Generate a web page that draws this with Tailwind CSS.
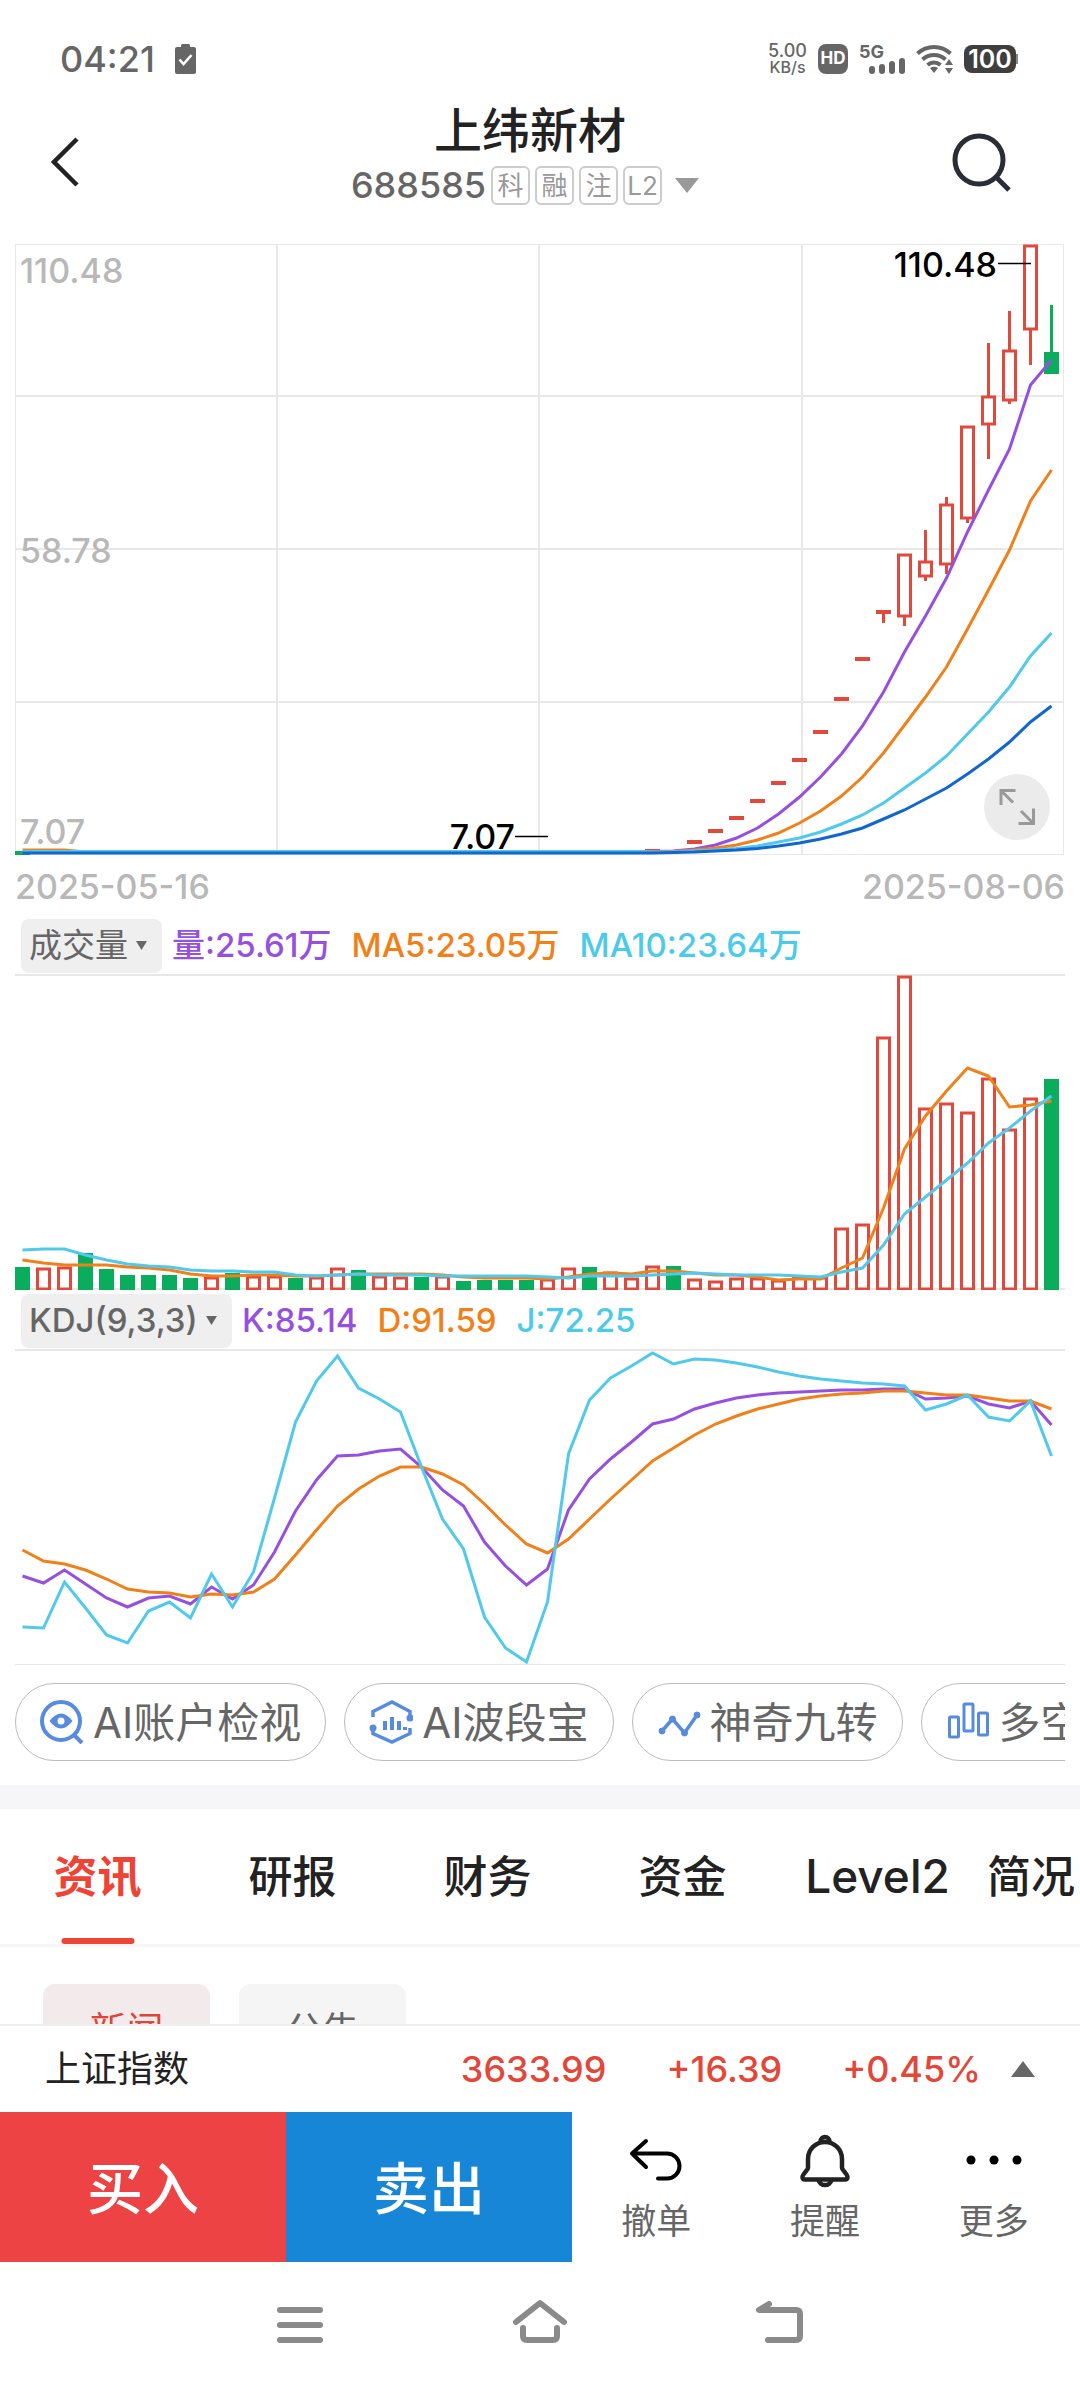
<!DOCTYPE html>
<html lang="zh-CN">

<head>
  <meta charset="UTF-8" />
  <meta name="viewport" content="width=device-width, initial-scale=1" />
  <title>上纬新材 688585</title>
  <script src="https://cdn.jsdelivr.net/npm/@tailwindcss/browser@4"></script>
</head>

<body class="bg-white text-[#222] font-['Inter','Noto_Sans_CJK_SC',sans-serif]">
  <div class="h-screen flex flex-col overflow-hidden">

    <!-- Status bar -->
    <div class="flex items-center justify-between pt-[36px] pl-[60px] pr-[62px] text-[#666]">
      <div class="flex items-center gap-[20px]">
        <span class="text-[36px] leading-[46px] font-medium">04:21</span>
        <svg class="w-[21px] h-[30px]" viewBox="0 0 21 30" fill="none">
          <path d="M0 5a2 2 0 0 1 2-2h4V1.500a1.500 1.500 0 0 1 1.500-1.500h6A1.500 1.500 0 0 1 15 1.500V3h4a2 2 0 0 1 2 2v23a2 2 0 0 1-2 2H2a2 2 0 0 1-2-2z" fill="#666" />
          <path d="M4.500 15.500l4 4.500 8-9" stroke="#fff" stroke-width="2.600" />
        </svg>
      </div>
      <div class="flex items-center gap-[11px]">
        <div class="text-center text-[16px] leading-[17px] font-medium">
          <div class="text-[18px]">5.00</div>
          <div>KB/s</div>
        </div>
        <span class="flex items-center justify-center w-[30px] h-[30px] rounded-lg bg-[#666] text-white text-[17px] font-bold">HD</span>
        <svg class="w-[46px] h-[34px]" viewBox="0 0 46 34" fill="#666">
          <text x="0" y="16" font-size="18" font-weight="700">5G</text>
          <rect x="10" y="24" width="6" height="8" rx="3" />
          <rect x="20" y="22" width="6" height="10" rx="3" />
          <rect x="30" y="19" width="6" height="13" rx="3" />
          <rect x="40" y="16" width="6" height="16" rx="3" />
        </svg>
        <svg class="w-[37px] h-[30px]" viewBox="0 0 37 30" fill="none" stroke="#666" stroke-width="4">
          <path d="M1.500 9.500a24 24 0 0 1 33 0" />
          <path d="M6.500 15.500a17 17 0 0 1 23 0" />
          <path d="M11.500 21a10 10 0 0 1 13 0" />
          <path d="M18 29l-4-5q4-2.500 8 0z" fill="#666" stroke="none" />
          <path d="M33 15l4 6h-8zM33 30l4-6h-8z" fill="#666" stroke="none" />
        </svg>
        <div class="flex items-center">
          <span class="flex items-center justify-center w-[52px] h-[28px] rounded-lg bg-[#3f3f3f] text-white text-[25px] leading-[28px] font-semibold">100</span>
          <span class="w-[2px] h-[10px] bg-[#888]"></span>
        </div>
      </div>
    </div>

    <!-- Title -->
    <header class="flex items-center pt-[19px] pb-[35px]">
      <button type="button" aria-label="返回" class="w-[120px] pl-[50px] pt-[14px]">
        <svg class="w-[30px] h-[50px]" viewBox="0 0 30 50" fill="none" stroke="#222" stroke-width="4.500">
          <path d="M27 2L4 25l23 23" />
        </svg>
      </button>
      <div class="flex-1 flex flex-col items-center">
        <h1 class="text-[48px] leading-[60px] font-medium">上纬新材</h1>
        <div class="flex items-center gap-[5px] pr-[10px] text-[26px] text-[#999]">
          <span class="text-[36px] leading-[48px] font-medium text-[#666]">688585</span>
          <span class="flex items-center justify-center w-[39px] h-[39px] border-2 border-[#ccc] rounded-md">科</span>
          <span class="flex items-center justify-center w-[39px] h-[39px] border-2 border-[#ccc] rounded-md">融</span>
          <span class="flex items-center justify-center w-[39px] h-[39px] border-2 border-[#ccc] rounded-md">注</span>
          <span class="flex items-center justify-center w-[39px] h-[39px] border-2 border-[#ccc] rounded-md">L2</span>
          <button type="button" aria-label="切换股票" class="pl-2">
            <svg class="w-[24px] h-[15px]" viewBox="0 0 24 15" fill="#999"><path d="M0 0h24L12 15z" /></svg>
          </button>
        </div>
      </div>
      <button type="button" aria-label="搜索" class="flex w-[140px] pl-[12px] pt-[14px]">
        <svg class="w-[60px] h-[60px]" viewBox="0 0 60 60" fill="none" stroke="#2a2c38" stroke-width="5">
          <circle cx="27" cy="28" r="24" />
          <path d="M44 45l13 13" />
        </svg>
      </button>
    </header>

    <main class="flex-1 min-h-0 overflow-hidden">
      <!-- Daily K line -->
      <section class="relative mx-[15px]">
        <svg id="priceChart" class="block w-full" viewBox="0 0 1050 612" fill="none">
          <g stroke="#e8e8e8" stroke-width="2">
            <path d="M0 152H1049M0 305H1049M0 458H1049M262 0V610M524 0V610M787 0V610" />
            <rect x="0.500" y="0.500" width="1048" height="610" stroke-width="1" />
          </g>
          <g fill="#b8b8b8" font-size="34" font-weight="500">
            <text x="5" y="39">110.48</text>
            <text x="5" y="319">58.78</text>
            <text x="5" y="600">7.07</text>
          </g>
          <g class="plot"></g>
          <g fill="#000" font-size="34" font-weight="500" text-anchor="end">
            <text x="982" y="33">110.48</text>
            <text x="500" y="605">7.07</text>
          </g>
          <path d="M983 19.500H1016M500 592.500H533" stroke="#000" stroke-width="1.500" />
        </svg>
        <button type="button" aria-label="全屏" class="absolute right-[15px] bottom-[16px]">
          <svg class="block w-[66px] h-[66px]" viewBox="0 0 66 66" fill="none" stroke="#999" stroke-width="3">
            <circle cx="33" cy="33" r="33" fill="#ebebeb" stroke="none" />
            <path d="M17 31V16.500H31.500M17 16.500L29 28.500M49.500 34.500V49.500H34.500M49.500 49.500L37 37" />
          </svg>
        </button>
      </section>
      <div class="flex justify-between mx-[15px] pt-[11px] pb-[8px] text-[34px] leading-[40px] font-medium text-[#b8b8b8]">
        <span>2025-05-16</span>
        <span>2025-08-06</span>
      </div>

      <!-- Volume -->
      <section class="mx-[15px]">
        <div class="flex items-center h-[59px] pl-[6px] pt-[3px] text-[33px] font-medium">
          <div class="relative mr-[10px]">
            <select aria-label="副图指标一" class="block appearance-none h-[54px] pl-[8px] pr-[34px] rounded-lg bg-[#efefef] text-[#666] font-normal">
              <option>成交量</option>
            </select>
            <svg class="absolute right-[15px] top-[22px] w-[11px] h-[9px] pointer-events-none" viewBox="0 0 11 9" fill="#666"><path d="M0 0h11L5.500 9z" /></svg>
          </div>
          <span class="mr-[20px] text-[#9650e0]">量:25.61万</span>
          <span class="mr-[20px] text-[#f28019]">MA5:23.05万</span>
          <span class="text-[#4bcaec]">MA10:23.64万</span>
        </div>
        <svg id="volumeChart" class="block w-full" viewBox="0 0 1050 316" fill="none">
          <path d="M0 1H1050M0 315H1050" stroke="#e8e8e8" stroke-width="2" />
          <g class="plot"></g>
        </svg>
      </section>

      <!-- KDJ -->
      <section class="mx-[15px]">
        <div class="flex items-center h-[59px] pl-[6px] pt-[3px] text-[33px] font-medium">
          <div class="relative mr-[10px]">
            <select aria-label="副图指标二" class="block appearance-none h-[54px] pl-[8px] pr-[34px] rounded-lg bg-[#efefef] text-[#666]">
              <option>KDJ(9,3,3)</option>
            </select>
            <svg class="absolute right-[15px] top-[22px] w-[11px] h-[9px] pointer-events-none" viewBox="0 0 11 9" fill="#666"><path d="M0 0h11L5.500 9z" /></svg>
          </div>
          <span class="mr-[20px] text-[#9650e0]">K:85.14</span>
          <span class="mr-[20px] text-[#f28019]">D:91.59</span>
          <span class="text-[#4bcaec]">J:72.25</span>
        </div>
        <svg id="kdjChart" class="block w-full" viewBox="0 0 1050 316" fill="none">
          <path d="M0 1H1050" stroke="#e8e8e8" stroke-width="2" />
          <path d="M0 315.500H1050" stroke="#e8e8e8" stroke-width="1" />
          <g class="plot"></g>
        </svg>
      </section>

      <!-- Tools -->
      <div class="flex gap-[18px] mx-[15px] pt-[18px] pb-[24px] overflow-hidden text-[42px] text-[#666]">
        <button type="button" class="flex shrink-0 items-center gap-[9px] h-[78px] px-[24px] border border-[#bbb] rounded-full">
          <svg class="w-[44px] h-[44px]" viewBox="0 0 44 44" fill="none" stroke="#568be0" stroke-width="4">
            <circle cx="21" cy="21" r="19" />
            <path d="M34 35l8 8" />
            <path d="M9.500 21q11.500-15 23 0q-11.500 15-23 0z" fill="#568be0" stroke="none" />
            <circle cx="21" cy="21" r="3.500" fill="#fff" stroke="none" />
          </svg>
          <span>AI账户检视</span>
        </button>
        <button type="button" class="flex shrink-0 items-center gap-[9px] h-[78px] px-[24px] border border-[#bbb] rounded-full">
          <svg class="w-[44px] h-[44px]" viewBox="0 0 44 44" fill="none" stroke="#568be0" stroke-width="3.500">
            <path d="M4 17V11.500L23 2l18 9.500V18M41 28v5.500L23 42 4 33.500V28" />
            <path d="M16 21v9M23 17v13M30 21v9M36 27v3" stroke-width="4" />
            <circle cx="41" cy="18" r="3.500" fill="#568be0" stroke="none" />
            <circle cx="4" cy="28" r="3.500" fill="#568be0" stroke="none" />
          </svg>
          <span>AI波段宝</span>
        </button>
        <button type="button" class="flex shrink-0 items-center gap-[9px] h-[78px] px-[24px] border border-[#bbb] rounded-full">
          <svg class="w-[44px] h-[44px]" viewBox="0 0 44 44" fill="#568be0" stroke="#568be0" stroke-width="3.500">
            <path d="M5 31L15.500 19 27.500 33 40 15" fill="none" />
            <circle cx="5" cy="31" r="3" stroke-width="1" />
            <circle cx="15.500" cy="19" r="3" stroke-width="1" />
            <circle cx="27.500" cy="33" r="3" stroke-width="1" />
            <circle cx="40" cy="15" r="3" stroke-width="1" />
          </svg>
          <span>神奇九转</span>
        </button>
        <button type="button" class="flex shrink-0 items-center gap-[9px] h-[78px] px-[24px] border border-[#bbb] rounded-full">
          <svg class="w-[44px] h-[44px]" viewBox="0 0 44 44" fill="none" stroke="#568be0" stroke-width="3">
            <rect x="3.500" y="17" width="9" height="20" rx="1" />
            <rect x="18" y="4" width="9" height="27" rx="1" />
            <rect x="32.500" y="13" width="9" height="22" rx="1" />
          </svg>
          <span>多空</span>
        </button>
      </div>

      <div class="h-[24px] bg-[#f6f6f9]"></div>

      <!-- Tabs -->
      <nav class="flex h-[138px] border-b-3 border-[#f6f6f6] overflow-hidden text-[44px] font-medium whitespace-nowrap">
        <a href="#" class="relative flex items-center justify-center shrink-0 w-[195px] text-[#ee4335] font-bold">资讯
          <span class="absolute bottom-0 left-1/2 -translate-x-1/2 w-[73px] h-[6px] rounded-full bg-[#ee4335]"></span>
        </a>
        <a href="#" class="flex items-center justify-center shrink-0 w-[195px]">研报</a>
        <a href="#" class="flex items-center justify-center shrink-0 w-[195px]">财务</a>
        <a href="#" class="flex items-center justify-center shrink-0 w-[195px]">资金</a>
        <a href="#" class="flex items-center justify-center shrink-0 w-[195px] text-[46px]">Level2</a>
        <a href="#" class="flex items-center shrink-0 pl-[12px]">简况</a>
      </nav>
      <div class="flex gap-[29px] pt-[37px] pl-[43px] text-[37px]">
        <button type="button" class="w-[167px] h-[94px] rounded-xl bg-[#f3eaeb] text-[#de4438]">新闻</button>
        <button type="button" class="w-[167px] h-[94px] rounded-xl bg-[#f5f5f5] text-[#666]">公告</button>
      </div>
    </main>

    <!-- Index bar -->
    <div class="flex items-center h-[88px] pl-[45px] pr-[45px] bg-white border-t-2 border-[#efefef] text-[36px] font-medium text-[#e2473a]">
      <span class="flex-1 font-normal text-[#222]">上证指数</span>
      <span>3633.99</span>
      <span class="ml-[60px]">+16.39</span>
      <span class="ml-[60px]">+0.45%</span>
      <button type="button" aria-label="展开指数" class="ml-[30px]">
        <svg class="w-[24px] h-[16px]" viewBox="0 0 24 16" fill="#666"><path d="M0 16h24L12 0z" /></svg>
      </button>
    </div>

    <!-- Trade bar -->
    <footer class="flex h-[150px] bg-white">
      <button type="button" class="w-[286px] pt-[4px] bg-[#ee4344] text-white text-[56px] font-medium">买入</button>
      <button type="button" class="w-[286px] pt-[4px] bg-[#1886d7] text-white text-[56px] font-medium">卖出</button>
      <div class="flex-1 grid grid-cols-3 pr-[2px] text-[35px] leading-[50px] text-[#666]">
        <button type="button" class="flex flex-col items-center pt-[12px]">
          <svg class="w-[72px] h-[72px]" viewBox="0 0 72 72" fill="none" stroke="#000" stroke-width="4" stroke-linecap="round" stroke-linejoin="round">
            <path d="M26 17L12 29.500 26 43M12 29.500H47a12.500 12.500 0 0 1 0 25H38" />
          </svg>
          <span>撤单</span>
        </button>
        <button type="button" class="flex flex-col items-center pt-[12px]">
          <svg class="w-[72px] h-[72px]" viewBox="0 0 72 72" fill="none" stroke="#222" stroke-width="4.500" stroke-linejoin="round">
            <path d="M36 18c-9.500 0-17 7.500-17 17v9c0 2-5.500 6-5.500 9 0 1.500 1 2.500 2.500 2.500h40c1.500 0 2.500-1 2.500-2.500 0-3-5.500-7-5.500-9v-9c0-9.500-7.500-17-17-17z" />
            <path d="M31.500 17.500a4.500 4.500 0 0 1 9 0M29.500 56a6.700 6.700 0 0 0 13 0" />
          </svg>
          <span>提醒</span>
        </button>
        <button type="button" class="flex flex-col items-center pt-[12px]">
          <svg class="w-[72px] h-[72px]" viewBox="0 0 72 72" fill="#000">
            <circle cx="13" cy="36" r="4.500" />
            <circle cx="36" cy="36" r="4.500" />
            <circle cx="59" cy="36" r="4.500" />
          </svg>
          <span>更多</span>
        </button>
      </div>
    </footer>

    <!-- System navigation -->
    <div class="flex items-center justify-center gap-[180px] h-[126px] bg-white">
      <button type="button" aria-label="最近任务">
        <svg class="w-[60px] h-[60px]" viewBox="0 0 60 60" stroke="#8a8a8a" stroke-width="6" stroke-linecap="round">
          <path d="M10 15H50M10 30H50M10 45H50" />
        </svg>
      </button>
      <button type="button" aria-label="主屏幕">
        <svg class="w-[60px] h-[60px]" viewBox="0 0 60 60" fill="none" stroke="#8a8a8a" stroke-width="6" stroke-linecap="round" stroke-linejoin="round">
          <path d="M6 27L30 8 54 27M13 33V41q0 4 4 4H43q4 0 4-4V33" />
        </svg>
      </button>
      <button type="button" aria-label="返回上一页">
        <svg class="w-[60px] h-[60px]" viewBox="0 0 60 60" fill="none" stroke="#8a8a8a" stroke-width="6" stroke-linecap="round" stroke-linejoin="round">
          <path d="M19 9L9 15H46q4 0 4 4V41q0 4-4 4H18" />
        </svg>
      </button>
    </div>
  </div>

  <script>
    const RED = '#e0493c';
    const GREEN = '#09ad5c';
    const PURPLE = '#9650e0';
    const ORANGE = '#f0801a';
    const CYAN = '#50c9ec';
    const BLUE = '#1166cf';

    // 50 trading days, one every 21 units
    const xAt = i => 7.5 + i * 21;

    function line(values, color) {
      const points = values.map((y, i) => `${xAt(i)},${y}`).join(' ');
      return `<polyline points="${points}" stroke="${color}" stroke-width="3" />`;
    }

    function box(i, top, bottom, up) {
      const x = xAt(i);
      if (!up) return `<rect x="${x - 7.5}" y="${top}" width="15" height="${bottom - top}" fill="${GREEN}" />`;
      return `<rect x="${x - 6}" y="${top + 1}" width="12" height="${Math.max(bottom - top - 2, 1)}" stroke="${RED}" stroke-width="3" />`;
    }

    function draw(id, html) {
      document.querySelector(`#${id} .plot`).innerHTML = html;
    }

    // [day, high, top, bottom, low, up]
    const candles = [
      [42, 310, 310, 373, 382, true],
      [43, 286, 317, 333, 337, true],
      [44, 253, 260, 321, 330, true],
      [45, 182, 182, 275, 279, true],
      [46, 99, 152, 181, 215, true],
      [47, 67, 106, 157, 160, true],
      [48, 1, 1, 86, 121, true],
      [49, 61, 108, 130, 130, false]
    ];
    // days with a single price: [day, y]
    const flat = [
      [0, 609], [11, 608], [12, 608], [14, 608], [15, 608], [17, 608], [18, 608], [20, 608], [25, 608], [26, 608],
      [29, 608], [30, 607], [32, 598], [33, 587], [34, 574], [35, 557], [36, 539], [37, 516], [38, 488],
      [39, 455], [40, 415], [41, 368]
    ];

    const lead = y => Array(30).fill(y);
    const ma = [
      [PURPLE, [...lead(608), 607.5, 607, 605, 601, 594, 584, 570, 553, 533, 510, 482, 448, 408, 372, 334, 288, 246, 205, 141, 116]],
      [ORANGE, [606, 606, 606, ...lead(608).slice(3), 608, 607.5, 606, 604, 601, 596, 589, 579, 567, 552, 533, 509, 481, 453, 423, 385, 346, 306, 257, 226]],
      [CYAN, [...lead(607.5), 608, 608, 607, 606, 604.5, 602, 598, 594, 588, 580, 571, 559, 544, 529, 512, 490, 468, 443, 412, 389]],
      [BLUE, [...lead(609), 609, 608.5, 608, 607, 606, 604.5, 602, 599, 595, 590, 584, 575, 566, 555, 544, 530, 515, 498, 478, 462]]
    ];

    draw('priceChart',
      candles.map(([i, high, top, bottom, low, up]) => {
        const color = up ? RED : GREEN;
        return `<path d="M${xAt(i)} ${high}V${top}M${xAt(i)} ${bottom}V${low}" stroke="${color}" stroke-width="3" />` + box(i, top, bottom, up);
      }).join('') +
      flat.map(([i, y]) => `<rect x="${xAt(i) - 7.5}" y="${y - 2}" width="15" height="4" fill="${i ? RED : GREEN}" />`).join('') +
      `<path d="M${xAt(41)} 368V379" stroke="${RED}" stroke-width="3" />` +
      ma.map(([color, values]) => line(values, color)).join('')
    );

    const volumeTop = [
      293, 294, 293, 279, 295, 301, 301, 301, 304, 303, 299, 302, 302, 304, 303, 294, 296, 302, 303, 303,
      302, 307, 306, 306, 306, 305, 294, 293, 298, 304, 292, 292, 305, 307, 304, 304, 306, 303, 303, 254,
      250, 63, 2, 134, 129, 138, 104, 155, 124, 105
    ];
    const downDays = [0, 3, 4, 5, 6, 7, 8, 10, 13, 16, 19, 21, 22, 23, 24, 27, 31, 49];
    const volumeMa5 = [
      286, 289, 291, 291, 291, 293, 294, 296, 300, 302, 302, 301, 301, 302, 302, 301, 300, 300, 300, 300,
      301, 303, 304, 304, 304, 305, 303, 300, 299, 300, 297, 297, 299, 301, 301, 303, 306, 305, 305, 294,
      284, 234, 175, 142, 117, 94, 102, 133, 131, 127
    ];
    const volumeMa10 = [
      276, 275, 275, 281, 286, 290, 292, 293, 296, 297, 297, 298, 298, 301, 302, 301, 300, 301, 301, 301,
      302, 302, 302, 302, 302, 303, 304, 302, 302, 302, 301, 300, 299, 300, 301, 301, 301, 302, 303, 298,
      294, 271, 240, 223, 206, 189, 169, 154, 137, 122
    ];
    draw('volumeChart',
      volumeTop.map((top, i) => box(i, top, 316, !downDays.includes(i))).join('') +
      line(volumeMa5, ORANGE) + line(volumeMa10, CYAN)
    );

    const k = [
      227, 234, 221, 235, 249, 258, 249, 247, 255, 238, 250, 236, 203, 162, 131, 107, 106, 102, 100, 118,
      141, 157, 193, 217, 236, 220, 161, 130, 110, 93, 75, 70, 60, 54, 49, 46, 44, 43, 42, 41,
      41, 40, 40, 50, 49, 47, 55, 59, 52, 76
    ];
    const d = [
      201, 212, 215, 221, 230, 240, 243, 244, 248, 245, 246, 243, 230, 206, 181, 157, 140, 127, 118, 118,
      125, 136, 155, 176, 195, 204, 190, 170, 150, 131, 112, 99, 86, 75, 67, 60, 55, 50, 47, 45,
      44, 42, 42, 44, 46, 46, 49, 52, 52, 60
    ];
    const j = [
      278, 279, 233, 259, 286, 294, 262, 253, 269, 225, 258, 223, 149, 73, 32, 7, 39, 50, 63, 118,
      170, 200, 268, 299, 313, 253, 105, 51, 29, 17, 4, 15, 10, 11, 14, 18, 23, 27, 30, 32,
      34, 35, 37, 61, 55, 46, 68, 72, 52, 107
    ];
    draw('kdjChart', line(k, PURPLE) + line(d, ORANGE) + line(j, CYAN));
  </script>
</body>

</html>
